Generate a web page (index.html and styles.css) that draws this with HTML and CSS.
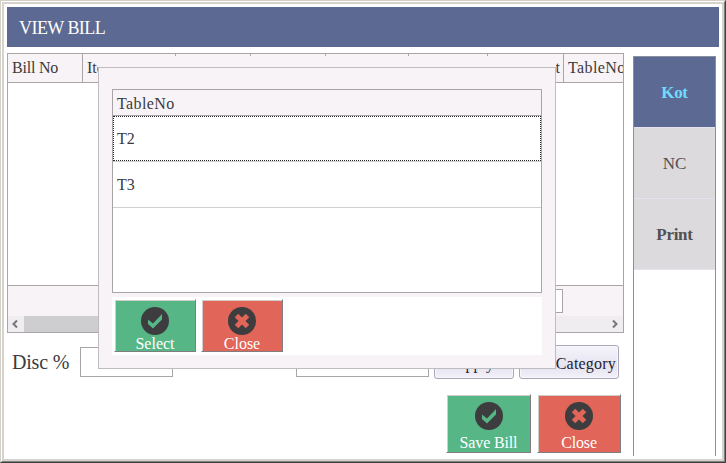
FILE: index.html
```
<!DOCTYPE html>
<html lang="en">
<head>
<meta charset="utf-8">
<title>View Bill</title>
<link rel="stylesheet" href="styles.css">
</head>
<body>
<svg class="defs" aria-hidden="true">
  <symbol id="check" viewBox="0 0 28 28"><circle cx="14" cy="14" r="14" fill="#3d3c3f"/><path d="M7 12.500l5 4L21 7v5.500L12 21.500 7 17z" fill="currentColor"/></symbol>
  <symbol id="cross" viewBox="0 0 28 28"><circle cx="14" cy="14" r="14" fill="#3d3c3f"/><path d="M8.500 8.500l11 11M19.500 8.500l-11 11" stroke="currentColor" stroke-width="5"/></symbol>
</svg>
<div class="window"><div class="frame">
  <header class="title"><span>VIEW BILL</span></header>
  <div class="body">
    <main class="main">
      <section class="grid">
        <div class="grid-head">
          <div class="c1"><span class="bill">Bill No</span></div><div class="c2">Item</div><div class="c3"></div><div class="c4"></div><div class="c5"></div><div class="c6"></div><div class="c7">Amount</div><div class="c8"><span class="tbl">TableNo</span></div>
        </div>
        <div class="grid-body"></div>
        <div class="grid-foot"><div class="total"></div></div>
        <div class="scroll">
          <svg class="arrow" viewBox="0 0 6 8"><path d="M5 .5L1.500 4 5 7.500"/></svg>
          <div class="thumb"></div>
          <svg class="arrow" viewBox="0 0 6 8"><path d="M1 .5L4.500 4 1 7.500"/></svg>
        </div>
      </section>
      <div class="discount">
        <label><span>Disc %</span></label>
        <div class="field percent"></div>
        <div class="field amount"></div>
        <div class="soft apply">Apply</div>
        <div class="soft category"><span>Category</span></div>
      </div>
      <div class="actions">
        <div class="btn green save"><svg><use href="#check"/></svg><span>Save Bill</span></div>
        <div class="btn red close"><svg><use href="#cross"/></svg><span>Close</span></div>
      </div>
    </main>
    <nav class="side">
      <div class="tab active"><b>Kot</b></div>
      <div class="tab">NC</div>
      <div class="tab"><b>Print</b></div>
    </nav>
  </div>
</div></div>
<div class="dialog">
  <div class="dialog-box">
    <div class="tables">
      <div class="tables-head"><span class="tbl">TableNo</span></div>
      <div class="row focus"><span>T2</span></div>
      <div class="row">T3</div>
    </div>
    <div class="dialog-actions">
      <div class="btn small green"><svg><use href="#check"/></svg><span>Select</span></div>
      <div class="btn small red"><svg><use href="#cross"/></svg><span>Close</span></div>
    </div>
  </div>
</div>
</body>
</html>
```
FILE: styles.css
```
* { box-sizing: border-box; }
body { margin: 0; width: 726px; height: 463px; overflow: hidden; font: 16px/20px "Liberation Serif", serif; color: #3b3a3d; }
.defs { position: absolute; width: 0; height: 0; }
.window { height: 463px; border: 1px solid #d4d0c8; border-right-color: #404040; border-bottom-color: #404040; }
.frame { height: 461px; border: 1px solid #fff; border-right-color: #808080; border-bottom-color: #808080; box-shadow: inset 0 0 0 2px #d6d3ce; padding: 5px; background: #fff; }
.title { width: 712px; height: 40px; background: #5c6992; color: #fff; font-size: 18px; line-height: 42px; padding-left: 12px; letter-spacing: -.55px; }
.body { display: flex; }
.main { width: 617px; margin-top: 6px; }
.grid { height: 280px; border: 1px solid #a8a4a8; background: #f7f3f7; display: flex; flex-direction: column; }
.grid-head { display: grid; grid-template-columns: 75px 93px 75px 75px 83px 79px 76px 59px; height: 29px; border-bottom: 1px solid #a8a4a8; }
.grid-head > div { border-right: 1px solid #a8a4a8; padding-left: 4px; line-height: 28px; overflow: hidden; white-space: nowrap; }
.grid-head .c7 { text-align: right; padding-right: 3px; }
.grid-head .c8 { border: 0; }
.tbl { letter-spacing: .4px; }
.bill { letter-spacing: -.2px; }
.grid-body { height: 202px; background: #fff; }
.grid-foot { height: 31px; border-top: 1px solid #a8a4a8; padding: 3px 0 0 480px; }
.total { width: 75px; height: 24px; border: 1px solid #a8a4a8; background: #fff; }
.scroll { height: 16px; background: #f0edf1; display: flex; align-items: center; padding: 0 5px 0 4px; }
.arrow { width: 6px; height: 8px; fill: none; stroke: #77757a; stroke-width: 2; }
.thumb { width: 450px; height: 16px; background: #cecdd0; margin: 0 134px 0 6px; flex: 1; }
.discount { display: flex; margin-top: 12px; height: 34px; }
.discount label { width: 73px; padding-left: 5px; font-size: 20px; line-height: 34px; white-space: nowrap; letter-spacing: -.2px; }
.field { height: 30px; margin-top: 2px; border: 1px solid #a8a4a8; background: #fff; }
.percent { width: 93px; }
.amount { width: 133px; margin-left: 123px; }
.soft { height: 34px; border: 1px solid #aaa7ba; border-radius: 3px; background: linear-gradient(#f5f4fa, #e5e3f0 65%, #f3f2fa); box-shadow: inset 0 0 0 1px #f7f6fc; text-align: center; line-height: 35px; color: #24222f; }
.apply { width: 80px; margin-left: 5px; }
.category { width: 100px; margin-left: 5px; text-align: right; padding-right: 2px; letter-spacing: .2px; }
.actions { display: flex; gap: 7px; margin: 15px 0 0 439px; }
.btn { width: 84px; height: 59px; border: 1px solid #fff; border-right-color: #807d80; border-bottom-color: #807d80; box-shadow: inset 1px 1px #d1cdca; color: #fff; display: flex; flex-direction: column; align-items: center; }
.save { width: 85px; margin-right: -1px; }
.btn svg { width: 28px; height: 28px; margin-top: 7px; flex: none; }
.btn span { line-height: 20px; margin-top: 3px; white-space: nowrap; letter-spacing: -.15px; }
.green { background: #56b686; } .green svg { color: #56b686; }
.red { background: #e16558; } .red svg { color: #e16558; }
.small { width: 82px; height: 53px; }
.small span { margin-top: -1px; letter-spacing: 0; }
.side { width: 83px; height: 400px; margin: 9px 0 0 9px; border: 1px solid #8990a2; border-bottom: 0; }
.side .tab { height: 71px; border-bottom: 1px solid #e5e2ef; background: #dcdadd; color: #515053; text-align: center; line-height: 71px; font-size: 17px; }
.side b { letter-spacing: -.3px; }
.side .active { background: #5c6992; color: #6edcff; }
.dialog { position: absolute; left: 98px; top: 56px; width: 458px; height: 313px; padding-top: 11px; background: #f7f3f7; }
.dialog-box { height: 302px; border: 1px solid #bfbcc0; padding: 21px 13px 13px; }
.tables { height: 204px; border: 1px solid #a8a4a8; background: #fff; }
.tables-head { height: 26px; padding-left: 4px; border-bottom: 1px solid #a8a4a8; background: #f7f3f7; line-height: 28px; }
.row { height: 46px; border-bottom: 1px solid #d0ced1; padding-left: 4px; line-height: 46px; }
.focus { padding: 0; }
.focus span { display: block; height: 45px; padding-left: 3px; border: 1px dotted #262528; line-height: 44px; }
.dialog-actions { display: flex; gap: 5px; height: 58px; margin-top: 4px; padding: 2px 0 0 2px; background: #fff; }
```
